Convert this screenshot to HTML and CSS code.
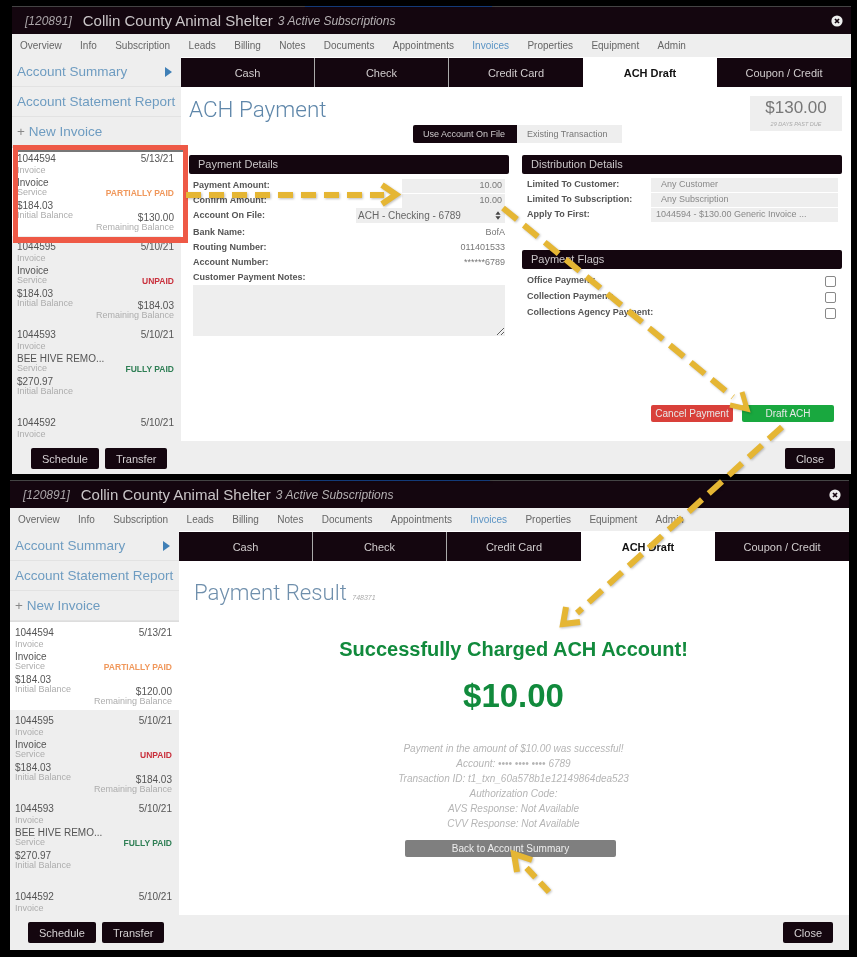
FILE: index.html
```html
<!DOCTYPE html>
<html lang="en">
<head>
<meta charset="utf-8">
<title>Collin County Animal Shelter</title>
<link rel="stylesheet" href="styles.css">
</head>
<body>
<div class="canvas">

<section class="window w1">
  <header class="titlebar">
    <span class="acct">[120891]</span><span class="cust">Collin County Animal Shelter</span><span class="subs">3 Active Subscriptions</span>
    <svg class="x" viewBox="0 0 12 12" width="12" height="12"><circle cx="6" cy="6" r="5.6" fill="#eee"/><path d="M4 4l4 4M8 4l-4 4" stroke="#14060f" stroke-width="1.7"/></svg>
  </header>
  <nav class="nav"><a>Overview</a><a>Info</a><a>Subscription</a><a>Leads</a><a>Billing</a><a>Notes</a><a>Documents</a><a>Appointments</a><a class="on">Invoices</a><a>Properties</a><a>Equipment</a><a>Admin</a></nav>
  <div class="body">
    <aside class="side">
      <a class="slink">Account Summary<i class="tri"></i></a>
      <a class="slink">Account Statement Report</a>
      <a class="slink"><b class="plus">+</b> New Invoice</a>
      <div class="list">
        <article class="item active">
          <div class="col"><span class="n">1044594</span><span class="s">Invoice</span><span class="n t">Invoice</span><span class="s">Service</span><span class="n t">$184.03</span><span class="s">Initial Balance</span></div>
          <div class="col r"><span class="n">5/13/21</span><span class="st partial">PARTIALLY PAID</span><span class="n amt">$130.00</span><span class="s">Remaining Balance</span></div>
        </article>
        <article class="item">
          <div class="col"><span class="n">1044595</span><span class="s">Invoice</span><span class="n t">Invoice</span><span class="s">Service</span><span class="n t">$184.03</span><span class="s">Initial Balance</span></div>
          <div class="col r"><span class="n">5/10/21</span><span class="st unpaid">UNPAID</span><span class="n amt">$184.03</span><span class="s">Remaining Balance</span></div>
        </article>
        <article class="item">
          <div class="col"><span class="n">1044593</span><span class="s">Invoice</span><span class="n t">BEE HIVE REMO...</span><span class="s">Service</span><span class="n t">$270.97</span><span class="s">Initial Balance</span></div>
          <div class="col r"><span class="n">5/10/21</span><span class="st paid">FULLY PAID</span></div>
        </article>
        <article class="item">
          <div class="col"><span class="n">1044592</span><span class="s">Invoice</span></div>
          <div class="col r"><span class="n">5/10/21</span></div>
        </article>
      </div>
    </aside>
    <main class="main">
      <div class="tabs"><a>Cash</a><a>Check</a><a>Credit Card</a><a class="cur">ACH Draft</a><a>Coupon / Credit</a></div>
      <div class="pane">
        <div class="head">
          <h1>ACH Payment</h1>
          <div class="due"><strong>$130.00</strong><em>29 DAYS PAST DUE</em></div>
        </div>
        <div class="seg"><a class="sel">Use Account On File</a><a>Existing Transaction</a></div>
        <div class="cols">
          <div>
            <h2 class="bar">Payment Details</h2>
            <div class="form">
              <div class="row"><label>Payment Amount:</label><span class="inp w1i">10.00</span></div>
              <div class="row"><label>Confirm Amount:</label><span class="inp w1i">10.00</span></div>
              <div class="row"><label>Account On File:</label><span class="sel-box">ACH - Checking - 6789<svg viewBox="0 0 7 10" width="6" height="9"><path d="M3.5 0L6.5 4H.5zM3.5 10L.5 6h6z" fill="#444"/></svg></span></div>
              <div class="row gap"><label>Bank Name:</label><span class="val">BofA</span></div>
              <div class="row"><label>Routing Number:</label><span class="val">011401533</span></div>
              <div class="row"><label>Account Number:</label><span class="val">******6789</span></div>
              <div class="row"><label>Customer Payment Notes:</label></div>
              <textarea class="notes"></textarea>
            </div>
          </div>
          <div>
            <h2 class="bar">Distribution Details</h2>
            <div class="form dist">
              <div class="row"><label>Limited To Customer:</label><span class="dv pad">Any Customer</span></div>
              <div class="row"><label>Limited To Subscription:</label><span class="dv pad">Any Subscription</span></div>
              <div class="row"><label>Apply To First:</label><span class="dv">1044594 - $130.00 Generic Invoice ...</span></div>
            </div>
            <h2 class="bar flags">Payment Flags</h2>
            <div class="form checks">
              <div class="row"><label>Office Payment:</label><i class="cb"></i></div>
              <div class="row"><label>Collection Payment:</label><i class="cb"></i></div>
              <div class="row"><label>Collections Agency Payment:</label><i class="cb"></i></div>
            </div>
          </div>
        </div>
        <div class="actions"><a class="btn red">Cancel Payment</a><a class="btn green">Draft ACH</a></div>
      </div>
    </main>
  </div>
  <footer class="foot"><a class="dk">Schedule</a><a class="dk">Transfer</a><a class="dk close">Close</a></footer>
</section>

<section class="window w2">
  <header class="titlebar">
    <span class="acct">[120891]</span><span class="cust">Collin County Animal Shelter</span><span class="subs">3 Active Subscriptions</span>
    <svg class="x" viewBox="0 0 12 12" width="12" height="12"><circle cx="6" cy="6" r="5.6" fill="#eee"/><path d="M4 4l4 4M8 4l-4 4" stroke="#14060f" stroke-width="1.7"/></svg>
  </header>
  <nav class="nav"><a>Overview</a><a>Info</a><a>Subscription</a><a>Leads</a><a>Billing</a><a>Notes</a><a>Documents</a><a>Appointments</a><a class="on">Invoices</a><a>Properties</a><a>Equipment</a><a>Admin</a></nav>
  <div class="body">
    <aside class="side">
      <a class="slink">Account Summary<i class="tri"></i></a>
      <a class="slink">Account Statement Report</a>
      <a class="slink"><b class="plus">+</b> New Invoice</a>
      <div class="list">
        <article class="item active">
          <div class="col"><span class="n">1044594</span><span class="s">Invoice</span><span class="n t">Invoice</span><span class="s">Service</span><span class="n t">$184.03</span><span class="s">Initial Balance</span></div>
          <div class="col r"><span class="n">5/13/21</span><span class="st partial">PARTIALLY PAID</span><span class="n amt">$120.00</span><span class="s">Remaining Balance</span></div>
        </article>
        <article class="item">
          <div class="col"><span class="n">1044595</span><span class="s">Invoice</span><span class="n t">Invoice</span><span class="s">Service</span><span class="n t">$184.03</span><span class="s">Initial Balance</span></div>
          <div class="col r"><span class="n">5/10/21</span><span class="st unpaid">UNPAID</span><span class="n amt">$184.03</span><span class="s">Remaining Balance</span></div>
        </article>
        <article class="item">
          <div class="col"><span class="n">1044593</span><span class="s">Invoice</span><span class="n t">BEE HIVE REMO...</span><span class="s">Service</span><span class="n t">$270.97</span><span class="s">Initial Balance</span></div>
          <div class="col r"><span class="n">5/10/21</span><span class="st paid">FULLY PAID</span></div>
        </article>
        <article class="item">
          <div class="col"><span class="n">1044592</span><span class="s">Invoice</span></div>
          <div class="col r"><span class="n">5/10/21</span></div>
        </article>
      </div>
    </aside>
    <main class="main">
      <div class="tabs"><a>Cash</a><a>Check</a><a>Credit Card</a><a class="cur">ACH Draft</a><a>Coupon / Credit</a></div>
      <div class="pane result">
        <h1 class="rtitle">Payment Result <small>748371</small></h1>
        <p class="ok">Successfully Charged ACH Account!</p>
        <p class="big">$10.00</p>
        <div class="lines">
          <p>Payment in the amount of $10.00 was successful!</p>
          <p>Account: <span class="dots">&bull;&bull;&bull;&bull; &bull;&bull;&bull;&bull; &bull;&bull;&bull;&bull;</span> 6789</p>
          <p>Transaction ID: t1_txn_60a578b1e12149864dea523</p>
          <p>Authorization Code:</p>
          <p>AVS Response: Not Available</p>
          <p>CVV Response: Not Available</p>
        </div>
        <a class="back">Back to Account Summary</a>
      </div>
    </main>
  </div>
  <footer class="foot"><a class="dk">Schedule</a><a class="dk">Transfer</a><a class="dk close">Close</a></footer>
</section>

<div class="redbox"></div>
<svg class="arrows" viewBox="0 0 857 957" width="857" height="957" fill="none" stroke="#e5b634" stroke-width="6">
  <path d="M305 6.500H492M300 480.500H490" stroke="#133a78" stroke-width="1"/>
  <path d="M186 195H384" stroke-dasharray="15 8"/>
  <path d="M382 185l14 9.500-14 9.500" stroke-width="6"/>
  <path d="M503 208L733 397" stroke-dasharray="18 9"/>
  <path d="M742 392l5 17-17-4" stroke-width="5"/>
  <path d="M782 427L577 613" stroke-dasharray="18 9"/>
  <path d="M566 607l-3 17 17-2" stroke-width="6"/>
  <path d="M549 892L522 863" stroke-dasharray="13 7"/>
  <path d="M517 872l-3-18 18 6" stroke-width="6"/>
</svg>
</div>
</body>
</html>
```
FILE: styles.css
```css
* { box-sizing: border-box; }
html, body { margin: 0; padding: 0; background: #000; }
body { font-family: "Liberation Sans", Arial, sans-serif; color: #555; }
p, h1, h2 { margin: 0; font-weight: normal; }
.canvas { position: relative; width: 857px; height: 957px; overflow: hidden; background: #000; filter: blur(.5px); }

.window { position: absolute; width: 839px; display: flex; flex-direction: column; background: #fff; border-top: 1px solid #444; }
.w1 { left: 12px; top: 6px; height: 468px; }
.w2 { left: 10px; top: 480px; height: 470px; }

.titlebar { flex: none; height: 27px; background: #14060f; display: flex; align-items: center; padding: 0 8px 0 13px; color: #c9c5c7; }
.acct { font-size: 12px; font-style: italic; margin-right: 11px; color: #aaa5a8; }
.cust { font-size: 15px; }
.subs { font-size: 12px; font-style: italic; margin-left: 5px; color: #b5b1b3; }
.x { margin-left: auto; }

.nav { flex: none; height: 23px; background: #eee; display: flex; align-items: center; padding-left: 8px; gap: 18.400px; font-size: 10px; color: #666; }
.nav .on { color: #5a93c4; }

.body { flex: 1; display: flex; min-height: 0; }
.side { flex: none; width: 169px; background: #eee; display: flex; flex-direction: column; overflow: hidden; }
.slink { flex: none; height: 30px; display: flex; align-items: center; padding-left: 5px; font-size: 13.500px; color: #6e9cc1; border-bottom: 1px solid #e2e2e2; white-space: pre; }
.plus { font-weight: normal; color: #888; }
.tri { margin-left: auto; margin-right: 9px; width: 0; height: 0; border-left: 7px solid #3f7fb6; border-top: 5px solid transparent; border-bottom: 5px solid transparent; }
.list { flex: 1; border-top: 1px solid #ddd; overflow: hidden; }
.item { height: 88px; padding: 6px 7px 0 5px; display: flex; justify-content: space-between; }
.item.active { background: #fff; }
.col { display: flex; flex-direction: column; min-width: 0; }
.col.r { align-items: flex-end; }
.n { font-size: 10px; line-height: 10px; height: 10px; color: #555; white-space: nowrap; }
.s { font-size: 9px; line-height: 9px; height: 9px; color: #adadad; white-space: nowrap; }
.n + .s:nth-child(2) { margin-top: 1.500px; }
.n.t { margin-top: 3.500px; }
.st { margin-top: 23.500px; height: 11px; line-height: 11px; font-size: 8.500px; font-weight: bold; white-space: nowrap; }
.partial { color: #f0985c; }
.unpaid { color: #c9313d; }
.paid { color: #2f7f55; }
.n.amt { margin-top: 14.500px; }

.main { flex: 1; min-width: 0; display: flex; flex-direction: column; background: #fff; }
.tabs { flex: none; margin-top: 1px; height: 29px; display: grid; grid-template-columns: 134px 134px 134px 134px 134px; }
.tabs a { background: #14060f; color: #d0cccd; font-size: 11px; display: flex; align-items: center; justify-content: center; border-right: 1px solid #aaa; }
.tabs a:nth-child(3), .tabs a:nth-child(5) { border-right: 0; }
.tabs .cur { background: #fff; color: #111; font-weight: bold; border-right: 0; }
.pane { flex: 1; display: flex; flex-direction: column; padding: 0 9px 0 8px; min-height: 0; }

.head { flex: none; height: 38px; display: flex; justify-content: space-between; align-items: flex-start; }
.head h1 { font-family: Roboto, "Liberation Sans", sans-serif; font-weight: 300; font-size: 22.500px; line-height: 28px; margin-top: 8px; color: #5f87aa; }
.due { width: 92px; height: 35px; margin-top: 9px; background: #eee; display: flex; flex-direction: column; align-items: center; }
.due strong { font-weight: normal; font-size: 17px; line-height: 24px; color: #777; }
.due em { font-size: 5.500px; line-height: 8px; color: #aaa; }
.seg { flex: none; height: 18px; display: flex; justify-content: center; font-size: 9px; margin-left: 4px; }
.seg a { display: flex; align-items: center; padding: 0 10px; background: #eee; color: #777; width: 105px; white-space: nowrap; }
.seg .sel { background: #14060f; color: #cfcbcd; width: 104px; border-radius: 2px 0 0 2px; }

.cols { flex: none; margin-top: 12px; display: grid; grid-template-columns: 320px 320px; gap: 13px; }
.bar { height: 19px; background: #14060f; color: #c9c5c7; font-size: 11px; line-height: 19px; padding-left: 9px; border-radius: 2px; }
.form { padding: 4px 4px 0; }
.row { height: 15px; display: flex; align-items: center; justify-content: space-between; font-size: 9px; }
.row.gap { margin-top: 2px; }
.row label { font-weight: bold; color: #555; white-space: nowrap; position: relative; top: -1px; }
.val { color: #777; position: relative; top: -1px; }
.inp { height: 14px; width: 103px; background: #eee; color: #777; text-align: right; padding-right: 3px; line-height: 13px; }
.sel-box { height: 15px; width: 149px; background: #eee; color: #666; font-size: 10px; display: flex; align-items: center; justify-content: space-between; padding: 0 4px 0 2px; }
.notes { display: block; width: 312px; height: 51px; background: #eee; border: 0; margin: 0; padding: 0; resize: vertical; }
.dist { padding: 3px 4px 0 5px; }
.dist .row { justify-content: flex-start; }
.dist label { width: 124px; }
.dv { width: 187px; height: 14px; line-height: 13px; background: #eee; color: #888; padding-left: 5px; white-space: nowrap; }
.dv.pad { padding-left: 10px; }
.flags { margin-top: 28px; }
.checks { padding: 4px 6px 0 5px; }
.checks .row { height: 16px; }
.cb { width: 11px; height: 11px; border: 1px solid #888; border-radius: 2px; background: #fff; }

.actions { margin-top: auto; margin-bottom: 19px; margin-right: 8px; display: flex; justify-content: flex-end; gap: 9px; }
.btn { height: 17px; display: flex; align-items: center; justify-content: center; font-size: 10px; border-radius: 2px; color: #e8e8e8; }
.red { width: 82px; background: #d9403a; }
.green { width: 92px; background: #19a83f; }

.foot { flex: none; height: 33px; background: #eee; display: flex; align-items: center; padding: 2px 16px 0 19px; gap: 6px; }
.w2 .foot { height: 35px; padding: 0 16px 0 18px; }
.dk { height: 21px; padding: 0 11px; background: #14060f; color: #d4d0d2; font-size: 11px; display: flex; align-items: center; border-radius: 2px; }
.close { margin-left: auto; }

.result { align-items: center; }
.rtitle { align-self: flex-start; margin: 18px 0 0 7px; font-family: Roboto, "Liberation Sans", sans-serif; font-weight: 300; font-size: 22.200px; line-height: 26px; color: #6f8fac; }
.rtitle small { font-family: "Liberation Sans", sans-serif; font-size: 7px; font-style: italic; color: #aaa; }
.ok { margin-top: 26px; font-size: 20px; line-height: 24px; font-weight: bold; color: #118a3c; }
.big { margin-top: 16px; font-size: 33px; line-height: 38px; font-weight: bold; color: #118a3c; }
.lines { margin-top: 26px; text-align: center; font-style: italic; font-size: 10px; line-height: 15px; color: #b5b5b5; }
.back { margin: 9px 6px 0 0; width: 211px; height: 17px; background: #7f7f7f; color: #eee; font-size: 10px; display: flex; align-items: center; justify-content: center; border-radius: 2px; }

.redbox { position: absolute; left: 13px; top: 145px; width: 175px; height: 98px; border: 5px solid #ee5946; border-bottom-width: 6px; box-shadow: inset 0 2px 0 #777; }
.arrows { position: absolute; left: 0; top: 0; pointer-events: none; filter: drop-shadow(1px 1px 1px rgba(0,0,0,.25)); }
```
